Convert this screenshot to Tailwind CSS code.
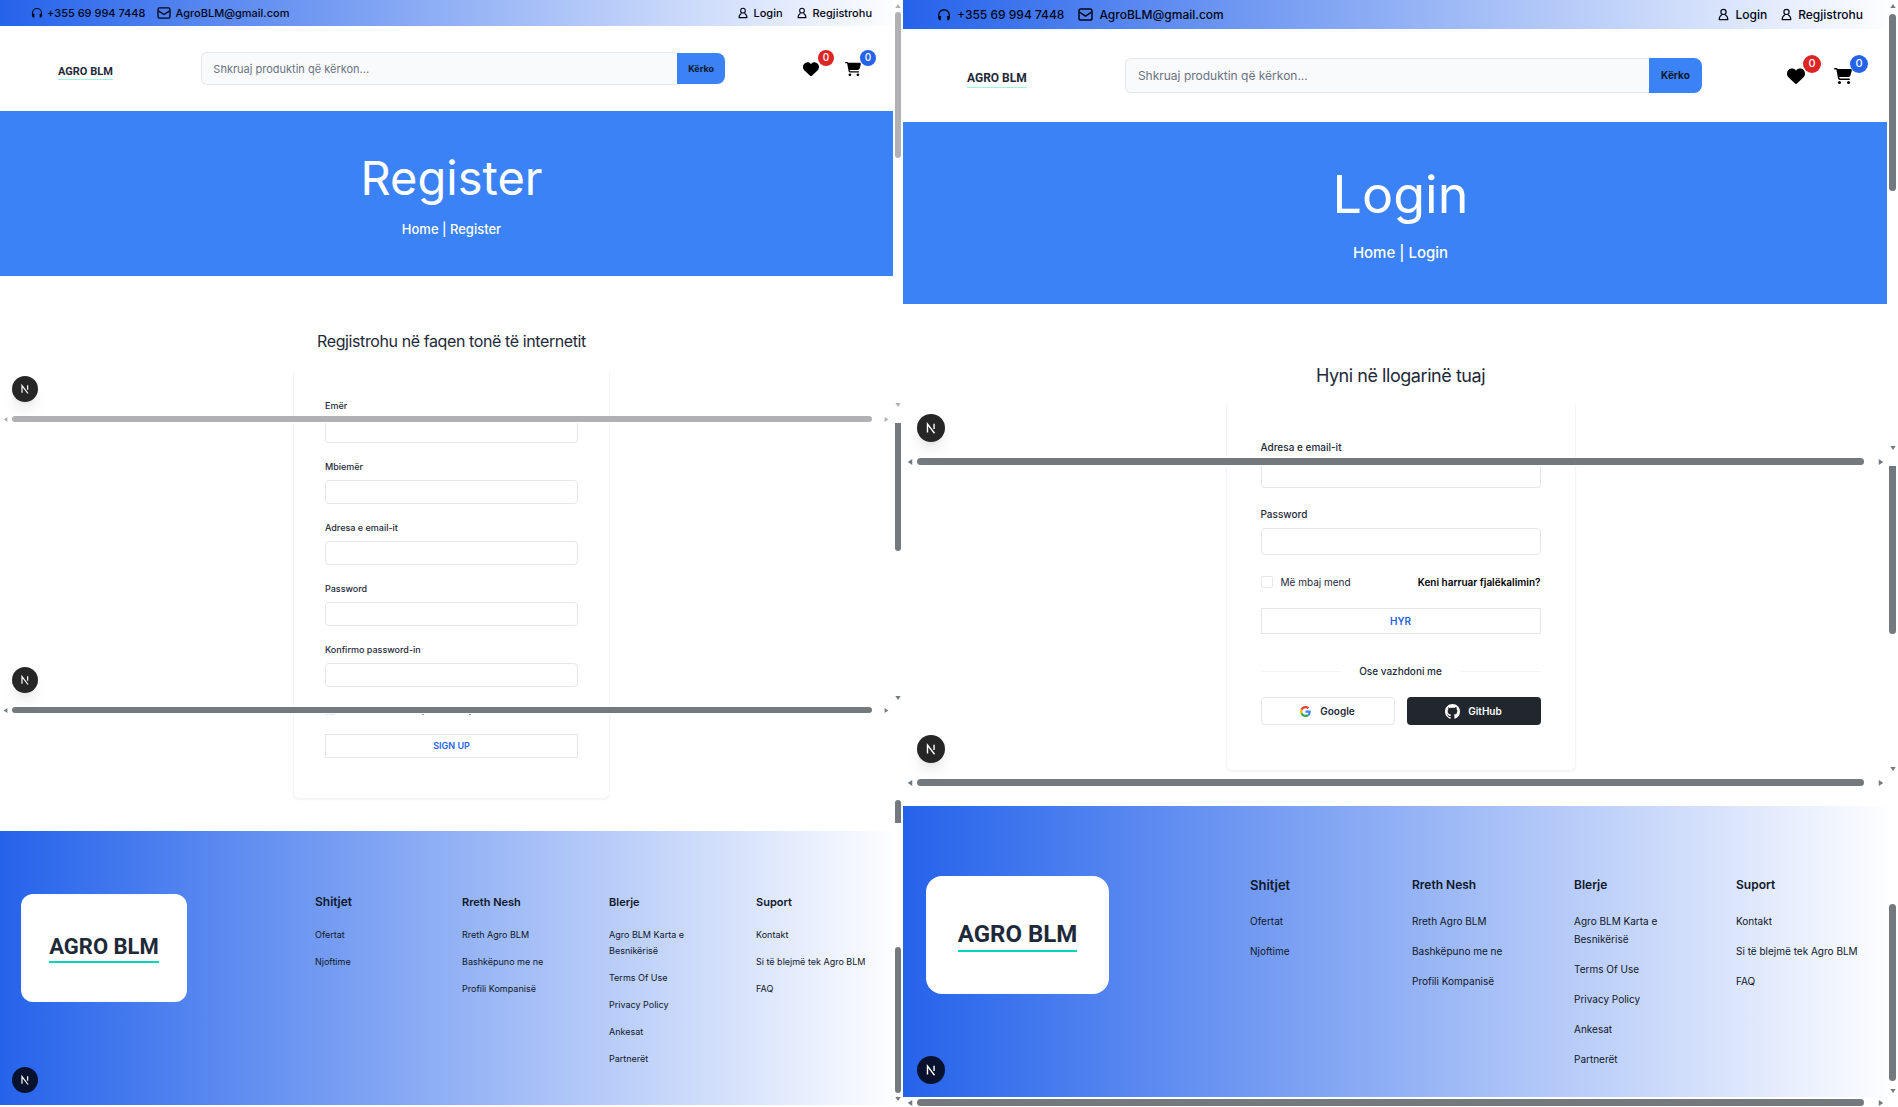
<!DOCTYPE html>
<html lang="sq">
<head>
<meta charset="utf-8">
<meta name="viewport" content="width=device-width, initial-scale=1">
<title>Agro BLM</title>
<script src="https://cdn.jsdelivr.net/npm/@tailwindcss/browser@4"></script>
</head>
<body class="bg-white font-['Inter',sans-serif] text-gray-800">
<svg class="hidden" aria-hidden="true">
  <symbol id="headset" viewBox="0 0 16 16"><path d="M2 12V8a6 6 0 0 1 12 0v4" fill="none" stroke="currentColor" stroke-width="1.5"/><path d="M1.6 9h2.9v5H3.2a1.6 1.6 0 0 1-1.6-1.6zM14.400 9h-2.900v5h1.300a1.600 1.600 0 0 0 1.600-1.600z" fill="currentColor"/></symbol>
  <symbol id="mail" viewBox="0 0 16 14"><rect x="1" y="1" width="14" height="12" rx="2" fill="none" stroke="currentColor" stroke-width="1.600"/><path d="M1.500 4.500 8 8.800l6.500-4.300" fill="none" stroke="currentColor" stroke-width="1.600"/></symbol>
  <symbol id="user" viewBox="0 0 14 16"><circle cx="7" cy="4.700" r="3.300" fill="none" stroke="currentColor" stroke-width="1.500"/><path d="M4.800 8.600C2.600 9.600 1.500 11.600 1.500 14.500h11c0-2.900-1.100-4.900-3.300-5.900" fill="none" stroke="currentColor" stroke-width="1.500" stroke-linejoin="round"/></symbol>
  <symbol id="heart" viewBox="0 0 512 512"><path fill="currentColor" d="M47.600 300.400 228.300 469.100c7.500 7 17.400 10.900 27.700 10.900s20.200-3.900 27.700-10.900L464.400 300.400c30.400-28.300 47.600-68 47.600-109.500v-5.800c0-69.900-50.500-129.500-119.400-141C347 36.500 300.600 51.400 268 84l-12 12-12-12c-32.600-32.600-79-47.500-124.600-39.900C50.500 55.600 0 115.200 0 185.100v5.800c0 41.500 17.200 81.200 47.600 109.500z"/></symbol>
  <symbol id="cart" viewBox="0 0 576 512"><path fill="currentColor" d="M0 24C0 10.700 10.700 0 24 0h45.500c22 0 41.500 12.800 50.600 32h411c26.300 0 45.500 25 38.600 50.400l-41 152.300c-8.500 31.400-37 53.300-69.500 53.300H170.700l5.400 28.500c2.200 11.300 12.100 19.500 23.600 19.500H488c13.300 0 24 10.700 24 24s-10.700 24-24 24H199.700c-34.600 0-64.300-24.600-70.700-58.500L77.400 54.500c-.7-3.800-4-6.500-7.900-6.500H24C10.700 48 0 37.300 0 24zm128 440a48 48 0 1 1 96 0 48 48 0 1 1-96 0zm336-48a48 48 0 1 1 0 96 48 48 0 1 1 0-96z"/></symbol>
  <symbol id="next" viewBox="0 0 16 16"><path d="M4 13V3.500L12 14" fill="none" stroke="currentColor" stroke-width="1.600"/><path d="M11.500 3v6" fill="none" stroke="currentColor" stroke-width="1.600"/></symbol>
  <symbol id="google" viewBox="0 0 24 24"><path d="M12.003 4.750c1.770 0 3.355.610 4.605 1.800l3.425-3.425C17.953 1.190 15.238 0 12.003 0 7.313 0 3.258 2.690 1.283 6.610l3.990 3.095C6.218 6.860 8.873 4.750 12.003 4.750z" fill="#EA4335"/><path d="M23.490 12.275c0-.785-.075-1.545-.190-2.275H12v4.510h6.470c-.290 1.480-1.140 2.740-2.400 3.590l3.865 3c2.255-2.090 3.555-5.180 3.555-8.825z" fill="#4285F4"/><path d="M5.265 14.295c-.240-.725-.380-1.495-.380-2.295s.135-1.570.380-2.295l-3.990-3.095C.460 8.230 0 10.060 0 12c0 1.940.460 3.770 1.280 5.390z" fill="#FBBC05"/><path d="M12.004 24c3.240 0 5.965-1.065 7.930-2.905l-3.865-3c-1.075.725-2.460 1.150-4.065 1.150-3.130 0-5.785-2.110-6.735-4.955l-3.990 3.095C3.260 21.310 7.310 24 12.004 24z" fill="#34A853"/></symbol>
  <symbol id="github" viewBox="0 0 20 20"><path fill="currentColor" fill-rule="evenodd" clip-rule="evenodd" d="M10 0C4.477 0 0 4.484 0 10.017c0 4.425 2.865 8.180 6.839 9.504.500.092.682-.217.682-.483 0-.237-.008-.868-.013-1.703-2.782.605-3.369-1.343-3.369-1.343-.454-1.158-1.110-1.466-1.110-1.466-.908-.620.069-.608.069-.608 1.003.070 1.531 1.032 1.531 1.032.892 1.530 2.341 1.088 2.910.832.092-.647.350-1.088.636-1.338-2.220-.253-4.555-1.113-4.555-4.951 0-1.093.390-1.988 1.029-2.688-.103-.253-.446-1.272.098-2.650 0 0 .840-.270 2.750 1.026A9.564 9.564 0 0110 4.844c.850.004 1.705.115 2.504.337 1.909-1.296 2.747-1.027 2.747-1.027.546 1.379.203 2.398.100 2.651.640.700 1.028 1.595 1.028 2.688 0 3.848-2.339 4.695-4.566 4.942.359.310.678.921.678 1.856 0 1.338-.012 2.419-.012 2.747 0 .268.180.580.688.482A10.019 10.019 0 0020 10.017C20 4.484 15.522 0 10 0z"/></symbol>
  <symbol id="up" viewBox="0 0 8 6"><path d="M4 0l4 6H0z" fill="currentColor"/></symbol>
  <symbol id="down" viewBox="0 0 8 6"><path d="M4 6L0 0h8z" fill="currentColor"/></symbol>
  <symbol id="left" viewBox="0 0 6 8"><path d="M0 4l6-4v8z" fill="currentColor"/></symbol>
  <symbol id="right" viewBox="0 0 6 8"><path d="M6 4L0 0v8z" fill="currentColor"/></symbol>
</svg>

<main class="grid grid-cols-[903fr_995fr] items-start">

<!-- Register page -->
<div class="min-w-0">
  <section class="relative">
    <div class="flex h-[26px] items-center bg-linear-to-r/srgb from-[#2563eb] to-white pl-[31px] pr-[31px] text-[11px] font-medium text-slate-950">
      <svg class="mr-1 h-3 w-3"><use href="#headset"/></svg><span>+355 69 994 7448</span>
      <svg class="ml-3 mr-1 h-3 w-[14px]"><use href="#mail"/></svg><a href="#">AgroBLM@gmail.com</a>
      <a href="#" class="ml-auto flex items-center gap-1.5"><svg class="h-3 w-[10px]"><use href="#user"/></svg>Login</a>
      <a href="#" class="ml-3.5 flex items-center gap-1.5"><svg class="h-3 w-[10px]"><use href="#user"/></svg>Regjistrohu</a>
    </div>
    <header class="grid h-[85px] grid-cols-[22.3%_58%_1fr] items-center">
      <a href="#" class="pl-[58px]"><span class="inline-block border-b border-teal-200 font-['Roboto',sans-serif] text-[11px] leading-[15px] font-bold text-gray-800">AGRO BLM</span></a>
      <form class="flex">
        <input type="text" aria-label="Kërko produkt" placeholder="Shkruaj produktin që kërkon..." class="h-[33px] min-w-0 flex-1 rounded-l-md border border-r-0 border-gray-200 bg-gray-50 pl-[11px] text-[11px] placeholder:text-gray-500">
        <button type="button" class="my-px w-12 rounded-r-lg bg-[#3b82f6] text-[9px] font-bold text-slate-900">Kërko</button>
      </form>
      <div class="flex justify-end gap-[26px] pr-[42px] text-black">
        <a href="#" aria-label="Të preferuarat" class="relative"><svg class="h-4 w-4"><use href="#heart"/></svg><span class="absolute -top-[11px] left-[15px] flex size-4 items-center justify-center rounded-full bg-[#dc2626] text-[10px] font-medium text-white">0</span></a>
        <a href="#" aria-label="Shporta" class="relative"><svg class="h-4 w-4"><use href="#cart"/></svg><span class="absolute -top-[11px] left-[15px] flex size-4 items-center justify-center rounded-full bg-[#2563eb] text-[10px] font-medium text-white">0</span></a>
      </div>
    </header>
    <div class="flex h-[165px] flex-col items-center bg-[#3b82f6] pt-[37px] text-white">
      <h1 class="text-[47px] leading-[60px]">Register</h1>
      <p class="mt-[11px] text-[13px] leading-5 font-medium"><a href="#">Home</a> | Register</p>
    </div>
    <div class="flex flex-col items-center pt-[55px]">
      <h2 class="text-[16px] leading-5 tracking-tight">Regjistrohu në faqen tonë të internetit</h2>
      <div class="mt-[21px] h-[43px] w-[317px] border-x border-gray-100 px-[31px] pt-7">
        <label for="r-name" class="block text-[9px] leading-3 font-medium">Emër</label>
      </div>
    </div>
    <div class="flex h-[8px] items-center gap-1 pl-[3px] pr-[14px] text-[#b0b0b5]">
      <svg class="size-[5px]"><use href="#left"/></svg><div class="h-[6px] flex-1 rounded-full bg-[#b0b0b5]"></div><svg class="ml-2 size-[5px]"><use href="#right"/></svg>
    </div>
    <div class="absolute inset-y-0 right-0 flex w-[10px] flex-col items-center bg-white pt-1 text-[#b0b0b5]">
      <svg class="h-1 w-1.5"><use href="#up"/></svg><div class="mt-1 h-[146px] w-[6px] rounded-full bg-[#b0b0b5]"></div><svg class="mt-auto mb-4 h-1 w-1.5"><use href="#down"/></svg>
    </div>
    <div class="absolute bottom-[21px] left-3 flex size-[26px] items-center justify-center rounded-full bg-neutral-800 text-white shadow-lg"><svg class="size-3"><use href="#next"/></svg></div>
  </section>

  <section class="relative">
    <div class="mx-auto h-[283px] w-[317px] border-x border-gray-100 px-[31px]">
      <input id="r-name" type="text" class="block h-5 w-full rounded-b border border-t-0 border-gray-200 px-2 text-[9px]">
      <label for="r-last" class="mt-[18px] block text-[9px] leading-3 font-medium">Mbiemër</label>
      <input id="r-last" type="text" class="mt-[7px] block h-6 w-full rounded border border-gray-200 px-2 text-[9px]">
      <label for="r-mail" class="mt-[18px] block text-[9px] leading-3 font-medium">Adresa e email-it</label>
      <input id="r-mail" type="email" class="mt-[7px] block h-6 w-full rounded border border-gray-200 px-2 text-[9px]">
      <label for="r-pass" class="mt-[18px] block text-[9px] leading-3 font-medium">Password</label>
      <input id="r-pass" type="password" class="mt-[7px] block h-6 w-full rounded border border-gray-200 px-2 text-[9px]">
      <label for="r-conf" class="mt-[18px] block text-[9px] leading-3 font-medium">Konfirmo password-in</label>
      <input id="r-conf" type="password" class="mt-[7px] block h-6 w-full rounded border border-gray-200 px-2 text-[9px]">
    </div>
    <div class="flex h-[8px] items-center gap-1 pl-[3px] pr-[14px] text-[#73797d]">
      <svg class="size-[5px]"><use href="#left"/></svg><div class="h-[6px] flex-1 rounded-full bg-[#73797d]"></div><svg class="ml-2 size-[5px]"><use href="#right"/></svg>
    </div>
    <div class="absolute inset-y-0 right-0 flex w-[10px] flex-col items-center bg-white text-[#73797d]">
      <div class="h-[128px] w-[6px] rounded-b-full bg-[#73797d]"></div><svg class="mt-auto mb-[14px] h-1 w-1.5"><use href="#down"/></svg>
    </div>
    <div class="absolute bottom-[21px] left-3 flex size-[26px] items-center justify-center rounded-full bg-neutral-800 text-white shadow-lg"><svg class="size-3"><use href="#next"/></svg></div>
  </section>

  <section class="relative pb-8">
    <div class="mx-auto h-[85px] w-[317px] rounded-b-md border border-t-0 border-gray-100 px-[31px] shadow-xs">
      <div class="flex h-5 items-start" aria-hidden="true">
        <span class="h-px w-2.5 bg-gray-200"></span><span class="ml-[87px] h-px w-0.5 bg-gray-400"></span><span class="ml-[45px] h-px w-0.5 bg-gray-400"></span>
      </div>
      <button type="button" class="block h-6 w-full border border-gray-200 text-[9px] font-semibold text-[#2563eb]">SIGN UP</button>
    </div>
    <div class="absolute right-0 bottom-2 flex w-[10px] justify-center"><div class="h-[23px] w-[6px] rounded-t-full bg-[#73797d]"></div></div>
  </section>

  <footer class="relative h-[274px] bg-linear-to-r/srgb from-[#2563eb] to-white pt-[63px] pl-[21px]">
    <div class="grid grid-cols-[2fr_1fr_1fr_1fr_1fr] text-[9px] leading-4 text-slate-900">
      <div><div class="flex h-[108px] w-[166px] items-center justify-center rounded-xl bg-white"><span class="border-b-2 border-teal-400 font-['Roboto',sans-serif] text-[22px] leading-7 font-bold text-gray-800">AGRO BLM</span></div></div>
      <div class="pr-6"><h3 class="text-[12px] font-semibold">Shitjet</h3><ul class="mt-[17px] flex flex-col gap-[11px]"><li><a href="#">Ofertat</a></li><li><a href="#">Njoftime</a></li></ul></div>
      <div class="pr-6"><h3 class="text-[11px] font-semibold">Rreth Nesh</h3><ul class="mt-[17px] flex flex-col gap-[11px]"><li><a href="#">Rreth Agro BLM</a></li><li><a href="#">Bashkëpuno me ne</a></li><li><a href="#">Profili Kompanisë</a></li></ul></div>
      <div class="pr-6"><h3 class="text-[11px] font-semibold">Blerje</h3><ul class="mt-[17px] flex flex-col gap-[11px]"><li><a href="#">Agro BLM Karta e Besnikërisë</a></li><li><a href="#">Terms Of Use</a></li><li><a href="#">Privacy Policy</a></li><li><a href="#">Ankesat</a></li><li><a href="#">Partnerët</a></li></ul></div>
      <div class="pr-6"><h3 class="text-[11px] font-semibold">Suport</h3><ul class="mt-[17px] flex flex-col gap-[11px]"><li><a href="#">Kontakt</a></li><li><a href="#">Si të blejmë tek Agro BLM</a></li><li><a href="#">FAQ</a></li></ul></div>
    </div>
    <div class="absolute inset-y-0 right-0 flex w-[10px] flex-col items-center justify-end bg-white pb-1 text-[#73797d]">
      <div class="h-[146px] w-[6px] rounded-full bg-[#73797d]"></div><svg class="mt-1 h-1 w-1.5"><use href="#down"/></svg>
    </div>
    <div class="absolute bottom-3 left-3 flex size-[26px] items-center justify-center rounded-full bg-[#08122e] text-white"><svg class="size-3"><use href="#next"/></svg></div>
  </footer>
</div>

<!-- Login page -->
<div class="min-w-0">
  <section class="relative">
    <div class="flex h-[29px] items-center bg-linear-to-r/srgb from-[#2563eb] to-white pl-[34px] pr-[35px] text-[12px] font-medium text-slate-950">
      <svg class="mr-1.5 h-3.5 w-3.5"><use href="#headset"/></svg><span>+355 69 994 7448</span>
      <svg class="ml-3.5 mr-1.5 h-[13px] w-[15px]"><use href="#mail"/></svg><a href="#">AgroBLM@gmail.com</a>
      <a href="#" class="ml-auto flex items-center gap-1.5"><svg class="h-[13px] w-[11px]"><use href="#user"/></svg>Login</a>
      <a href="#" class="ml-3.5 flex items-center gap-1.5"><svg class="h-[13px] w-[11px]"><use href="#user"/></svg>Regjistrohu</a>
    </div>
    <header class="grid h-[93px] grid-cols-[22.3%_58%_1fr] items-center">
      <a href="#" class="pl-16"><span class="inline-block border-b border-teal-200 font-['Roboto',sans-serif] text-[12px] leading-[17px] font-bold text-gray-800">AGRO BLM</span></a>
      <form class="flex">
        <input type="text" aria-label="Kërko produkt" placeholder="Shkruaj produktin që kërkon..." class="h-[35px] min-w-0 flex-1 rounded-l-md border border-r-0 border-gray-200 bg-gray-50 pl-3 text-[12px] placeholder:text-gray-500">
        <button type="button" class="w-[53px] rounded-r-lg bg-[#3b82f6] text-[10px] font-bold text-slate-900">Kërko</button>
      </form>
      <div class="flex justify-end gap-[29px] pr-[46px] text-black">
        <a href="#" aria-label="Të preferuarat" class="relative"><svg class="size-[18px]"><use href="#heart"/></svg><span class="absolute -top-3 left-4 flex size-[18px] items-center justify-center rounded-full bg-[#dc2626] text-[11px] font-medium text-white">0</span></a>
        <a href="#" aria-label="Shporta" class="relative"><svg class="size-[18px]"><use href="#cart"/></svg><span class="absolute -top-3 left-4 flex size-[18px] items-center justify-center rounded-full bg-[#2563eb] text-[11px] font-medium text-white">0</span></a>
      </div>
    </header>
    <div class="flex h-[182px] flex-col items-center bg-[#3b82f6] pt-10 text-white">
      <h1 class="text-[52px] leading-[66px]">Login</h1>
      <p class="mt-[15px] text-[15px] leading-5 font-medium"><a href="#">Home</a> | Login</p>
    </div>
    <div class="flex flex-col items-center pt-[61px]">
      <h2 class="text-[18px] leading-[22px] tracking-tight">Hyni në llogarinë tuaj</h2>
      <div class="mt-4 h-[54px] w-[350px] rounded-t border-x border-gray-100 px-[34px] pt-[37px]">
        <label for="l-mail" class="block text-[10px] leading-3.5 font-medium">Adresa e email-it</label>
      </div>
    </div>
    <div class="flex h-[9px] items-center gap-1 pl-1 pr-[14px] text-[#73797d]">
      <svg class="size-[6px]"><use href="#left"/></svg><div class="h-[7px] flex-1 rounded-full bg-[#73797d]"></div><svg class="ml-2.5 size-[6px]"><use href="#right"/></svg>
    </div>
    <div class="absolute inset-y-0 right-0 flex w-[11px] flex-col items-center bg-white pt-1 text-[#73797d]">
      <svg class="h-1 w-1.5"><use href="#up"/></svg><div class="mt-1.5 h-[177px] w-[7px] rounded-full bg-[#73797d]"></div><svg class="mt-auto mb-4 h-1 w-1.5"><use href="#down"/></svg>
    </div>
    <div class="absolute bottom-6 left-[14px] flex size-7 items-center justify-center rounded-full bg-neutral-800 text-white shadow-lg"><svg class="size-3.5"><use href="#next"/></svg></div>
  </section>

  <section class="relative">
    <div class="mx-auto h-[305px] w-[350px] rounded-b-md border border-t-0 border-gray-100 px-[34px] shadow-xs">
      <input id="l-mail" type="email" class="block h-[22px] w-full rounded-b border border-t-0 border-gray-200 px-2 text-[10px]">
      <label for="l-pass" class="mt-[19px] block text-[10px] leading-3.5 font-medium">Password</label>
      <input id="l-pass" type="password" class="mt-[7px] block h-[27px] w-full rounded border border-gray-200 px-2 text-[10px]">
      <div class="mt-5 flex h-3.5 items-center text-[10px]">
        <input id="l-keep" type="checkbox" class="size-3 appearance-none rounded-xs border border-gray-200">
        <label for="l-keep" class="ml-2">Më mbaj mend</label>
        <a href="#" class="ml-auto font-semibold text-black">Keni harruar fjalëkalimin?</a>
      </div>
      <button type="button" class="mt-[19px] block h-[26px] w-full border border-gray-200 text-[10px] font-semibold text-[#2563eb]">HYR</button>
      <div class="mt-[30px] flex h-3.5 items-center gap-[18px] text-[10px] font-medium"><div class="h-px flex-1 bg-gray-100"></div>Ose vazhdoni me<div class="h-px flex-1 bg-gray-100"></div></div>
      <div class="mt-[19px] grid grid-cols-2 gap-3 text-[10px] font-semibold">
        <button type="button" class="flex h-7 items-center justify-center gap-[9px] rounded border border-gray-200"><svg class="size-[11px]"><use href="#google"/></svg>Google</button>
        <button type="button" class="flex h-7 items-center justify-center gap-2 rounded bg-[#22272e] text-white"><svg class="size-[15px]"><use href="#github"/></svg>GitHub</button>
      </div>
    </div>
    <div class="mt-[7px] flex h-[9px] items-center gap-1 pl-1 pr-[14px] text-[#73797d]">
      <svg class="size-[6px]"><use href="#left"/></svg><div class="h-[7px] flex-1 rounded-full bg-[#73797d]"></div><svg class="ml-2.5 size-[6px]"><use href="#right"/></svg>
    </div>
    <div class="absolute inset-y-0 right-0 flex w-[11px] flex-col items-center bg-white text-[#73797d]">
      <div class="h-[168px] w-[7px] rounded-b-full bg-[#73797d]"></div><svg class="mt-auto mb-4 h-1 w-1.5"><use href="#down"/></svg>
    </div>
    <div class="absolute bottom-6 left-[14px] flex size-7 items-center justify-center rounded-full bg-neutral-800 text-white shadow-lg"><svg class="size-3.5"><use href="#next"/></svg></div>
  </section>

  <footer class="mt-[19px]">
    <div class="relative h-[291px] bg-linear-to-r/srgb from-[#2563eb] to-white pt-[70px] pl-[23px]">
      <div class="grid grid-cols-[2fr_1fr_1fr_1fr_1fr] text-[10px] leading-[18px] text-slate-900">
        <div><div class="flex h-[118px] w-[183px] items-center justify-center rounded-2xl bg-white"><span class="border-b-2 border-teal-400 font-['Roboto',sans-serif] text-[24px] leading-8 font-bold text-gray-800">AGRO BLM</span></div></div>
        <div class="pr-6"><h3 class="text-[13px] font-semibold">Shitjet</h3><ul class="mt-[18px] flex flex-col gap-3"><li><a href="#">Ofertat</a></li><li><a href="#">Njoftime</a></li></ul></div>
        <div class="pr-6"><h3 class="text-[12px] font-semibold">Rreth Nesh</h3><ul class="mt-[18px] flex flex-col gap-3"><li><a href="#">Rreth Agro BLM</a></li><li><a href="#">Bashkëpuno me ne</a></li><li><a href="#">Profili Kompanisë</a></li></ul></div>
        <div class="pr-6"><h3 class="text-[12px] font-semibold">Blerje</h3><ul class="mt-[18px] flex flex-col gap-3"><li><a href="#">Agro BLM Karta e Besnikërisë</a></li><li><a href="#">Terms Of Use</a></li><li><a href="#">Privacy Policy</a></li><li><a href="#">Ankesat</a></li><li><a href="#">Partnerët</a></li></ul></div>
        <div class="pr-6"><h3 class="text-[12px] font-semibold">Suport</h3><ul class="mt-[18px] flex flex-col gap-3"><li><a href="#">Kontakt</a></li><li><a href="#">Si të blejmë tek Agro BLM</a></li><li><a href="#">FAQ</a></li></ul></div>
      </div>
      <div class="absolute inset-y-0 right-0 flex w-[11px] flex-col items-center justify-end bg-white pb-1 text-[#73797d]">
        <div class="h-[177px] w-[7px] rounded-full bg-[#73797d]"></div><svg class="mt-2 h-1 w-1.5"><use href="#down"/></svg>
      </div>
      <div class="absolute bottom-[13px] left-[14px] flex size-7 items-center justify-center rounded-full bg-[#08122e] text-white"><svg class="size-3.5"><use href="#next"/></svg></div>
    </div>
    <div class="mt-px flex h-[9px] items-center gap-1 pl-1 pr-[14px] text-[#73797d]">
      <svg class="size-[6px]"><use href="#left"/></svg><div class="h-[7px] flex-1 rounded-full bg-[#73797d]"></div><svg class="ml-2.5 size-[6px]"><use href="#right"/></svg>
    </div>
  </footer>
</div>
</main>
</body>
</html>
